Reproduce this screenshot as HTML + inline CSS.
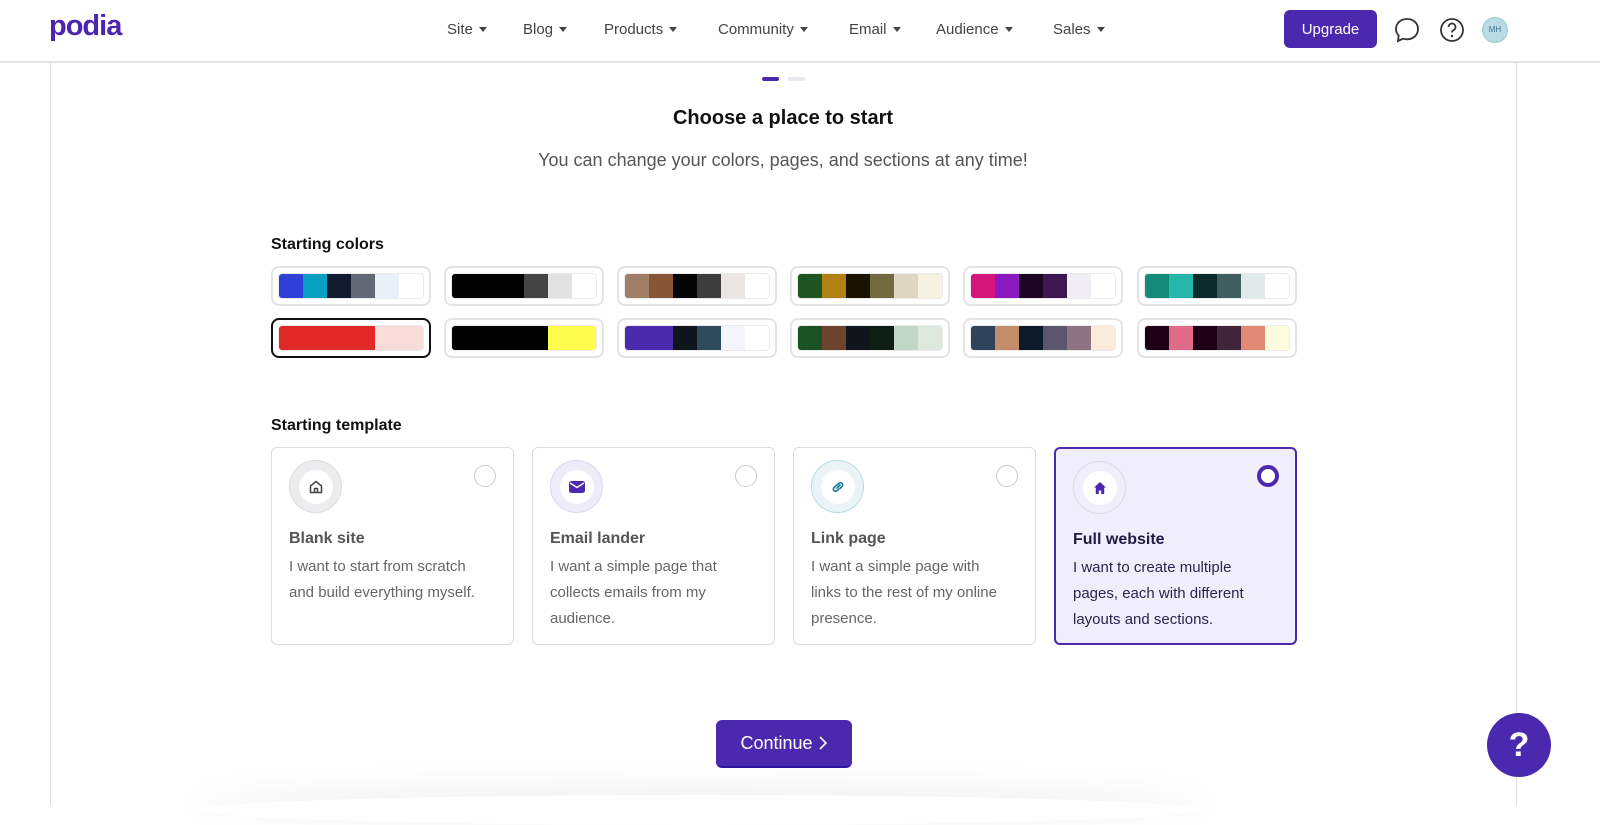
<!DOCTYPE html><html><head><style>
*{box-sizing:border-box;margin:0;padding:0}
body{width:1600px;height:805px;overflow:hidden;background:#fff;font-family:"Liberation Sans",sans-serif;position:relative;color:#111}
.hdr{position:absolute;left:0;top:0;width:1600px;height:63px;border-bottom:2px solid #e2e2e2;background:#fff}
.logo{position:absolute;left:49px;top:10px;font-size:29px;font-weight:bold;color:#4b25b0;letter-spacing:-1px}
.nav{position:absolute;top:21px;font-size:15px;color:#444}
.nav span{position:absolute;white-space:nowrap}
.nav span:after{content:"";display:inline-block;margin-left:6px;border-left:4px solid transparent;border-right:4px solid transparent;border-top:5px solid #444;vertical-align:2px}
.up{position:absolute;left:1284px;top:10px;width:93px;height:38px;background:#4b29ae;border-radius:6px;color:#fff;font-size:15px;display:flex;align-items:center;justify-content:center}
.frame{position:absolute;left:50px;top:63px;width:1467px;height:742px;border-left:1px solid #ddd;border-right:1px solid #ddd}
.abs{position:absolute}
.sw{position:absolute;width:160px;height:40px;border:2px solid #e4e4e4;border-radius:8px;padding:5px}
.sw.sel{border-color:#111}
.bar{display:flex;height:26px;border-radius:4px;overflow:hidden;border:1px solid rgba(0,0,0,.08)}
.bar i{flex:1}
.card{position:absolute;top:447px;width:243px;height:198px;border:1.5px solid #ddd;border-radius:6px;padding:0 17px}
.card .ic{position:absolute;left:17px;top:12px;width:53px;height:53px;border-radius:50%;display:flex;align-items:center;justify-content:center}
.card .ic b{width:34px;height:34px;border-radius:50%;background:#fff;display:flex;align-items:center;justify-content:center}
.card .rd{position:absolute;right:17px;top:17px;width:22px;height:22px;border-radius:50%;border:1.5px solid #ccc}
.card h3{position:absolute;left:17px;top:82px;font-size:16px;color:#555;font-weight:bold}
.card p{position:absolute;left:17px;top:106px;width:225px;font-size:15px;line-height:26px;color:#666;white-space:nowrap}
</style></head><body>
<div class="hdr">
<div class="logo">podia</div>
<div class="nav">
<span style="left:447px">Site</span><span style="left:523px">Blog</span><span style="left:604px">Products</span><span style="left:718px">Community</span><span style="left:849px">Email</span><span style="left:936px">Audience</span><span style="left:1053px">Sales</span>
</div>
<div class="up">Upgrade</div>
<svg class="abs" style="left:1394px;top:17px" width="26" height="26" viewBox="0 0 26 26"><path d="M13 2C6.5 2 2 6.5 2 12c0 2.5 1 4.8 2.7 6.5L4 24l5-2.3c1.2.4 2.6.6 4 .6 6.5 0 11-4.5 11-10.3S19.5 2 13 2z" fill="none" stroke="#333" stroke-width="1.8"/></svg>
<svg class="abs" style="left:1439px;top:17px" width="26" height="26" viewBox="0 0 26 26"><circle cx="13" cy="13" r="11" fill="none" stroke="#333" stroke-width="1.8"/><path d="M9.5 10a3.5 3.5 0 1 1 5 3.2c-1 .5-1.5 1.2-1.5 2.3" fill="none" stroke="#333" stroke-width="1.8"/><circle cx="13" cy="19" r="1.2" fill="#333"/></svg>
<div class="abs" style="left:1482px;top:17px;width:26px;height:26px;border-radius:50%;background:#b9dbe6;border:1px solid #9cc;color:#3a6f85;font-size:8px;text-align:center;line-height:24px">MH</div>
</div>
<div class="frame"></div>
<div class="abs" style="left:762px;top:77px;width:17px;height:4px;border-radius:2px;background:#4b29ae"></div>
<div class="abs" style="left:788px;top:77px;width:17px;height:4px;border-radius:2px;background:#e8e8ee"></div>
<div class="abs" style="left:0;width:1566px;top:107px;text-align:center;font-size:20px;font-weight:bold;color:#111">Choose a place to start</div>
<div class="abs" style="left:0;width:1566px;top:150px;text-align:center;font-size:18px;color:#555">You can change your colors, pages, and sections at any time!</div>
<div class="abs" style="left:271px;top:236px;font-size:16px;font-weight:bold">Starting colors</div>

<div class="sw" style="left:271px;top:266px"><div class="bar"><i style="background:#2e40d8"></i><i style="background:#079fc2"></i><i style="background:#111a2e"></i><i style="background:#626876"></i><i style="background:#e9f0fa"></i><i style="background:#fff"></i></div></div>
<div class="sw" style="left:444px;top:266px"><div class="bar"><i style="background:#000;flex:3"></i><i style="background:#444"></i><i style="background:#e2e2e2"></i><i style="background:#fff"></i></div></div>
<div class="sw" style="left:617px;top:266px"><div class="bar"><i style="background:#9f7d67"></i><i style="background:#885636"></i><i style="background:#050505"></i><i style="background:#3d3d3d"></i><i style="background:#ebe5e4"></i><i style="background:#fff"></i></div></div>
<div class="sw" style="left:790px;top:266px"><div class="bar"><i style="background:#1d5420"></i><i style="background:#b28113"></i><i style="background:#1a1300"></i><i style="background:#736940"></i><i style="background:#ddd7c3"></i><i style="background:#f5f2e2"></i></div></div>
<div class="sw" style="left:963px;top:266px"><div class="bar"><i style="background:#d4167a"></i><i style="background:#8a19c0"></i><i style="background:#1b0522"></i><i style="background:#3d1750"></i><i style="background:#f1edf5"></i><i style="background:#fff"></i></div></div>
<div class="sw" style="left:1137px;top:266px"><div class="bar"><i style="background:#138b78"></i><i style="background:#27b7aa"></i><i style="background:#0c2b2b"></i><i style="background:#3f5e5e"></i><i style="background:#e1eaea"></i><i style="background:#fff"></i></div></div>

<div class="sw sel" style="left:271px;top:318px"><div class="bar"><i style="background:#e12a27;flex:4"></i><i style="background:#f8dcd9;flex:2"></i></div></div>
<div class="sw" style="left:444px;top:318px"><div class="bar"><i style="background:#000;flex:4"></i><i style="background:#fefc4c;flex:2"></i></div></div>
<div class="sw" style="left:617px;top:318px"><div class="bar"><i style="background:#4b2bad;flex:2"></i><i style="background:#0f151c"></i><i style="background:#2d4b5b"></i><i style="background:#f4f6fb"></i><i style="background:#fff"></i></div></div>
<div class="sw" style="left:790px;top:318px"><div class="bar"><i style="background:#1a5224"></i><i style="background:#6c432c"></i><i style="background:#0e151c"></i><i style="background:#0f1e14"></i><i style="background:#c0d6c6"></i><i style="background:#dde9df"></i></div></div>
<div class="sw" style="left:963px;top:318px"><div class="bar"><i style="background:#2f435c"></i><i style="background:#c48c69"></i><i style="background:#0d1a29"></i><i style="background:#5a566d"></i><i style="background:#8e7482"></i><i style="background:#faebdb"></i></div></div>
<div class="sw" style="left:1137px;top:318px"><div class="bar"><i style="background:#1d0016"></i><i style="background:#e06b88"></i><i style="background:#1d0016"></i><i style="background:#3e253c"></i><i style="background:#e08a76"></i><i style="background:#fffde0"></i></div></div>

<div class="abs" style="left:271px;top:417px;font-size:16px;font-weight:bold">Starting template</div>

<div class="card" style="left:271px"><div class="ic" style="background:#ececee;border:1px solid #ddd"><b><svg width="16" height="16" viewBox="0 0 16 16"><path d="M2.5 7L8 2.5 13.5 7v6.5h-11z M6.5 13.5v-4h3v4" fill="none" stroke="#444" stroke-width="1.5" stroke-linejoin="round"/></svg></b></div><div class="rd"></div><h3>Blank site</h3><p>I want to start from scratch<br>and build everything myself.</p></div>
<div class="card" style="left:532px"><div class="ic" style="background:#efecfa;border:1px solid #ddd6f2"><b><svg width="18" height="14" viewBox="0 0 18 14"><rect x="1" y="1" width="16" height="12" rx="2.5" fill="#4b29ae"/><path d="M2 3l7 4.5L16 3" fill="none" stroke="#fff" stroke-width="1.4"/></svg></b></div><div class="rd"></div><h3>Email lander</h3><p>I want a simple page that<br>collects emails from my<br>audience.</p></div>
<div class="card" style="left:793px"><div class="ic" style="background:#eaf4f7;border:1px solid #b8dce6"><b><svg width="16" height="16" viewBox="0 0 16 16"><path d="M7 9l3-3 M6 6.5L4 8.5a2.2 2.2 0 0 0 3.2 3.2l1.5-1.5 M10 9.5l2-2a2.2 2.2 0 0 0-3.2-3.2L7.3 5.8" fill="none" stroke="#157a99" stroke-width="1.6" stroke-linecap="round"/></svg></b></div><div class="rd"></div><h3>Link page</h3><p>I want a simple page with<br>links to the rest of my online<br>presence.</p></div>
<div class="card" style="left:1054px;background:#f1eefb;border:2px solid #4b29ae"><div class="ic" style="background:#f1eefb;border:1px solid #ddd8ea"><b><svg width="16" height="16" viewBox="0 0 16 16"><path d="M8 2L2 7.5h1.8V14h3v-3.5h2.4V14h3V7.5H14z" fill="#4b29ae"/></svg></b></div><div class="rd" style="border:4px solid #4b29ae;background:#fff;right:16px;top:16px"></div><h3 style="color:#221a44">Full website</h3><p style="color:#2a2450">I want to create multiple<br>pages, each with different<br>layouts and sections.</p></div>

<div class="abs" style="left:200px;top:795px;width:1000px;height:30px;border-radius:50%;box-shadow:0 -6px 30px 6px rgba(0,0,0,.05)"></div>
<div class="abs" style="left:716px;top:720px;width:136px;height:48px;background:#4b29ae;border-radius:6px;border-bottom:2px solid #3316a0;color:#fff;font-size:18px;line-height:46px;text-align:center">Continue <svg width="10" height="14" viewBox="0 0 10 14" style="vertical-align:-1px"><path d="M2 1l6 6-6 6" fill="none" stroke="#fff" stroke-width="1.6"/></svg></div>
<div class="abs" style="left:1487px;top:713px;width:64px;height:64px;border-radius:50%;background:#4b29ae;color:#fff;font-size:34px;font-weight:bold;text-align:center;line-height:64px">?</div>
</body></html>
